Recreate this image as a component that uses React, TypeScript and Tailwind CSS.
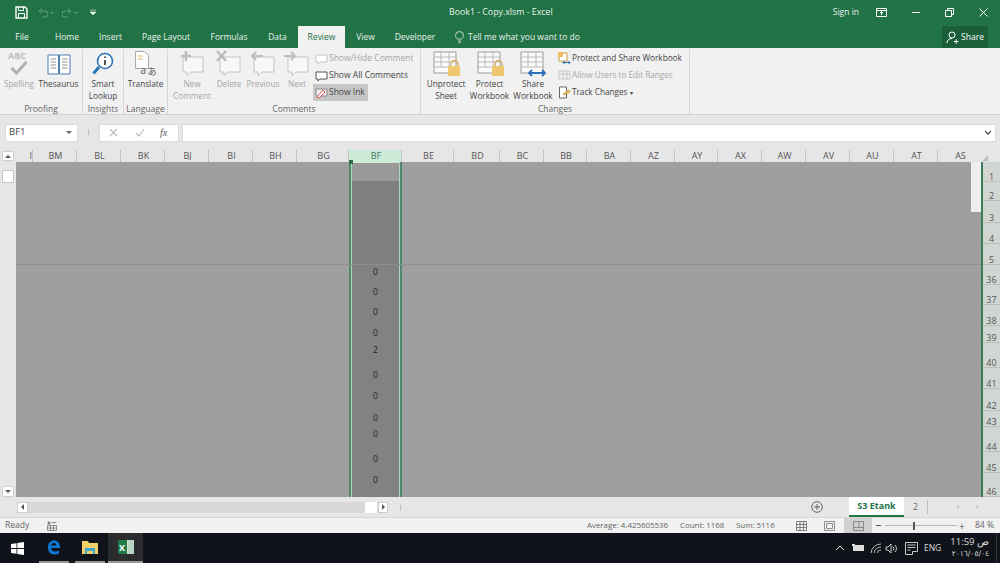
import React from "react";

function CommentIcon({ mark }: { mark: "plus" | "x" | "left" | "right" }) {
  return (
    <svg width="30" height="28" viewBox="0 0 30 28" fill="none">
      <path d="M6 7h20v15H14l-4 4v-4H6z" fill="#f8f8f8" stroke="#c4c4c4" />
      {mark === "plus" && <path d="M9 1v10M4 6h10" stroke="#bdbdbd" strokeWidth="2.4" />}
      {mark === "x" && <path d="M3 1l9 10M12 1L3 11" stroke="#b5b5b5" strokeWidth="2" />}
      {mark === "left" && <path d="M15 6H4M8 2L4 6l4 4" stroke="#bdbdbd" strokeWidth="2" />}
      {mark === "right" && <path d="M2 6h11M9 2l4 4-4 4" stroke="#bdbdbd" strokeWidth="2" />}
    </svg>
  );
}

function SheetIcon({ kind }: { kind: "unprotect" | "protect" | "share" }) {
  return (
    <svg width="30" height="28" viewBox="0 0 30 28" fill="none">
      <path d="M3 2h22v21H3z" fill="#fbfbfb" stroke="#9a9a9a" />
      <path d="M3 7h22M3 12h22M3 17h22M10 2v15M18 2v15" stroke="#b8b8b8" />
      {kind === "share" ? (
        <path d="M11 23h16M14 20l-3 3 3 3M24 20l3 3-3 3" stroke="#2f6fb5" strokeWidth="1.8" />
      ) : (
        <g>
          <path d="M20 16v-2a3.500 3.500 0 0 1 7 0v2" stroke="#d2aa55" strokeWidth="1.3" />
          <rect x="17" y="16" width="12" height="10" fill="#f0c671" />
        </g>
      )}
    </svg>
  );
}

function Big({ w, label, disabled, icon }: { w: string; label: React.ReactNode; disabled?: boolean; icon: React.ReactNode }) {
  return (
    <div className={`${w} flex flex-none flex-col items-center`}>
      <div className="flex h-[28px] items-center justify-center">{icon}</div>
      <div className={`whitespace-nowrap text-center text-[8.2px] leading-[12px] ${disabled ? "text-[#a6a6a6]" : "text-[#444444]"}`}>{label}</div>
    </div>
  );
}

function Group({ w, title, children }: { w: string; title: string; children: React.ReactNode }) {
  return (
    <div className={`${w} flex h-[66px] flex-none flex-col border-r border-[#d6d6d6]`}>
      <div className="flex h-[52px] items-start justify-center pt-[1px]">{children}</div>
      <div className="mt-auto text-center leading-[12px] text-[#666666]">{title}</div>
    </div>
  );
}

function Small({ icon, text, disabled, active }: { icon: React.ReactNode; text: React.ReactNode; disabled?: boolean; active?: boolean }) {
  return (
    <div className={`flex h-[17px] items-center gap-[1px] whitespace-nowrap pl-[2px] ${active ? "w-[55px] bg-[#c6c6c6]" : ""} ${disabled ? "text-[#a6a6a6]" : "text-[#444444]"}`}>
      <span className="flex h-[14px] w-[13px] flex-none items-center justify-center">{icon}</span>
      <span>{text}</span>
    </div>
  );
}

const Bubble = ({ c }: { c: string }) => (
  <svg width="13" height="12" viewBox="0 0 13 12" fill="none">
    <path d="M1 2h11v7H5l-2 2V9H1z" fill="#fff" stroke={c} />
  </svg>
);

const cols: [string, number][] = [
  ["BM", 44], ["BL", 44], ["BK", 44], ["BJ", 44], ["BI", 44], ["BH", 44], ["BG", 52], ["BF", 53], ["BE", 52],
  ["BD", 46], ["BC", 44], ["BB", 43], ["BA", 44], ["AZ", 44], ["AY", 43], ["AX", 44], ["AW", 44], ["AV", 44], ["AU", 44], ["AT", 44], ["AS", 44],
];

const topRows: [string, number][] = [["1", 20], ["2", 19], ["3", 22], ["4", 21], ["5", 21]];
const lowRows: [string, number, string][] = [
  ["36", 20, "0"], ["37", 20, "0"], ["38", 21, "0"], ["39", 17, "0"], ["40", 25, "2"], ["41", 21, "0"],
  ["42", 22, "0"], ["43", 16, "0"], ["44", 25, "0"], ["45", 21, "0"], ["46", 24, "0"],
];

const tabs = [
  ["File", "w-[44px]"], ["Home", "w-[46px]"], ["Insert", "w-[41px]"], ["Page Layout", "w-[70px]"],
  ["Formulas", "w-[56px]"], ["Data", "w-[41px]"],
];

function RowHead({ n, h }: { n: string; h: number }) {
  return (
    <div
      className="flex items-end justify-center border-b border-[#b9bfbb] text-[9px] leading-[9px] text-[#555555]"
      style={{ height: h }}
    >
      {n}
    </div>
  );
}

export default function App() {
  return (
    <div className="flex h-[563px] w-[1000px] flex-col overflow-hidden bg-[#e6e6e6] font-['Open_Sans','Noto_Sans',sans-serif] text-[8.5px]">
      {/* Title bar */}
      <div className="flex h-[25px] flex-none items-center bg-[#217346] text-[#e8f1ec]">
        <div className="flex w-[100px] flex-none items-center pl-[15px]">
          <svg width="13" height="13" viewBox="0 0 13 13" fill="none">
            <path d="M1 1h9l2 2v9H1z" stroke="#fff" strokeWidth="1.4" />
            <path d="M3.500 1v3.500h5V1M3.500 12V7.500h6V12" stroke="#fff" />
          </svg>
          <svg className="ml-[10px]" width="16" height="10" viewBox="0 0 16 10" fill="none">
            <path d="M1 3h6a3 3 0 0 1 0 6H4M1 3l3-2.500M1 3l3 2.500" stroke="#5f9c7c" />
            <path d="M12 4l2 2 2-2" fill="#5f9c7c" />
          </svg>
          <svg className="ml-[8px]" width="16" height="10" viewBox="0 0 16 10" fill="none">
            <path d="M9 3H3a3 3 0 0 0 0 6h3M9 3L6 .5M9 3L6 5.500" stroke="#5f9c7c" />
            <path d="M12 4l2 2 2-2" fill="#5f9c7c" />
          </svg>
          <svg className="ml-[12px]" width="6" height="7" viewBox="0 0 6 7">
            <path d="M0 1h6M0 3h6l-3 3z" fill="#e8f1ec" stroke="#e8f1ec" strokeWidth=".6" />
          </svg>
        </div>
        <div className="flex-1 pl-[349px] text-[8.8px]">Book1 - Copy.xlsm - Excel</div>
        <span>Sign in</span>
        <svg className="ml-[17px]" width="11" height="9" viewBox="0 0 11 9" fill="none">
          <path d="M.5.500h10v8H.5zM.5 2.500h10M5.500 7V4M4 5l1.500-1.500L7 5" stroke="#fff" />
        </svg>
        <div className="ml-[25px] h-[1px] w-[8px] bg-white" />
        <svg className="ml-[25px]" width="9" height="9" viewBox="0 0 9 9" fill="none">
          <path d="M.5 2.500h6v6h-6zM2.500 2.500v-2h6v6h-2" stroke="#fff" />
        </svg>
        <svg className="ml-[25px] mr-[12px]" width="9" height="9" viewBox="0 0 9 9" fill="none">
          <path d="M.5.500l8 8M8.500.500l-8 8" stroke="#fff" />
        </svg>
      </div>

      {/* Tabs */}
      <div className="flex h-[23px] flex-none items-stretch bg-[#217346] pt-[1px] text-[#e8f1ec]">
        {tabs.map(([t, w]) => (
          <div key={t} className={`${w} flex flex-none items-center justify-center`}>{t}</div>
        ))}
        <div className="flex w-[47px] flex-none items-center justify-center bg-[#f1f1f1] text-[#217346]">Review</div>
        <div className="flex w-[41px] flex-none items-center justify-center">View</div>
        <div className="flex w-[58px] flex-none items-center justify-center">Developer</div>
        <div className="ml-[11px] flex items-center gap-[4px]">
          <svg width="9" height="12" viewBox="0 0 9 12" fill="none">
            <path d="M2.500 8C1 6.800.5 5.800.5 4.500a4 4 0 0 1 8 0C8.500 5.800 8 6.800 6.500 8zM3 10h3M3.500 11.500h2" stroke="#e8f1ec" strokeWidth=".8" />
          </svg>
          <span>Tell me what you want to do</span>
        </div>
        <div className="ml-auto mr-[12px] flex w-[46px] items-center justify-center gap-[2px] bg-[#1b5e3a] text-white">
          <svg width="13" height="13" viewBox="0 0 13 13" fill="none">
            <circle cx="6" cy="4" r="3" stroke="#fff" />
            <path d="M1 12c0-3 2-4.500 5-4.500M8 10.500h4.500M10.200 8.300v4.500" stroke="#fff" />
          </svg>
          <span>Share</span>
        </div>
      </div>

      {/* Ribbon */}
      <div className="flex h-[67px] flex-none items-start border-b border-[#d2d2d2] bg-[#f1f1f1] pt-[1px]">
        <Group w="w-[83px]" title="Proofing">
          <div className="flex w-full items-start">
            <Big w="w-[38px]" disabled label="Spelling" icon={
              <div className="relative h-[28px] w-[24px]">
                <span className="absolute left-[1px] top-[1px] text-[9px] font-bold leading-[9px] text-[#bdbdbd]">ABC</span>
                <svg className="absolute left-[3px] top-[10px]" width="18" height="15" viewBox="0 0 18 15" fill="none">
                  <path d="M1.500 8l5 5L16.500 2" stroke="#b0b0b0" strokeWidth="3" />
                </svg>
              </div>
            } />
            <Big w="w-[41px]" label="Thesaurus" icon={
              <svg width="24" height="21" viewBox="0 0 24 21" fill="none">
                <path d="M1 1h10.500v19H1zM12.500 1H23v19H12.500z" fill="#fff" stroke="#4a7fb5" />
                <path d="M3.500 5h5.500M3.500 8h5.500M3.500 11h5.500M3.500 14h5.500M15 5h5.500M15 8h5.500M15 11h5.500M15 14h5.500" stroke="#8d8d8d" />
              </svg>
            } />
          </div>
        </Group>
        <Group w="w-[41px]" title="Insights">
          <Big w="w-[38px]" label={<>Smart<br />Lookup</>} icon={
            <svg width="22" height="24" viewBox="0 0 22 24" fill="none">
              <circle cx="13" cy="9" r="7.500" fill="#fff" stroke="#2e75b6" strokeWidth="1.600" />
              <path d="M13 8v5M13 4.500v1.500" stroke="#444" strokeWidth="1.800" />
              <path d="M7 15L1.500 21.500" stroke="#2e75b6" strokeWidth="3" />
            </svg>
          } />
        </Group>
        <Group w="w-[44px]" title="Language">
          <Big w="w-[42px]" label="Translate" icon={
            <div className="relative h-[26px] w-[22px] text-[#555555]">
              <svg className="absolute left-0 top-0" width="14" height="18" viewBox="0 0 14 18" fill="none">
                <path d="M.5.500h9l4 4v13H.5z" fill="#fff" stroke="#a8a8a8" />
                <path d="M3 5h5M3 8h5" stroke="#e0b060" />
              </svg>
              <span className="absolute bottom-[1px] left-[6px] text-[10px] leading-[11px]">a</span>
              <span className="absolute bottom-0 right-0 font-['Noto_Sans_CJK_JP',sans-serif] text-[9px] leading-[10px]">あ</span>
            </div>
          } />
        </Group>
        <Group w="w-[253px]" title="Comments">
          <div className="flex w-full items-start pl-[3px]">
            <Big w="w-[42px]" disabled label={<>New<br />Comment</>} icon={<CommentIcon mark="plus" />} />
            <Big w="w-[32px]" disabled label="Delete" icon={<CommentIcon mark="x" />} />
            <Big w="w-[36px]" disabled label="Previous" icon={<CommentIcon mark="left" />} />
            <Big w="w-[32px]" disabled label="Next" icon={<CommentIcon mark="right" />} />
            <div className="flex flex-col">
              <Small disabled icon={<Bubble c="#c4c4c4" />} text="Show/Hide Comment" />
              <Small icon={<Bubble c="#555" />} text="Show All Comments" />
              <Small active icon={
                <svg width="13" height="12" viewBox="0 0 13 12" fill="none">
                  <path d="M1 2h11v7H5l-2 2V9H1z" fill="#eee" stroke="#888" />
                  <path d="M2 10l6-7 2 2-6 6z" fill="#fff" stroke="#d9534f" />
                </svg>
              } text="Show Ink" />
            </div>
          </div>
        </Group>
        <Group w="w-[269px]" title="Changes">
          <div className="flex w-full items-start pl-[3px]">
            <Big w="w-[44px]" label={<>Unprotect<br />Sheet</>} icon={<SheetIcon kind="unprotect" />} />
            <Big w="w-[43px]" label={<>Protect<br />Workbook</>} icon={<SheetIcon kind="protect" />} />
            <Big w="w-[44px]" label={<>Share<br />Workbook</>} icon={<SheetIcon kind="share" />} />
            <div className="ml-[1px] flex flex-col text-[8.2px]">
              <Small icon={
                <svg width="13" height="13" viewBox="0 0 13 13" fill="none">
                  <path d="M1 1h8v8H1z" fill="#fff" stroke="#c79a3a" />
                  <rect x="0" y="0" width="5" height="5" fill="#eebc5a" />
                  <path d="M5 10.500h7M6.500 9L5 10.500 6.500 12M10.500 9l1.500 1.500-1.500 1.500" stroke="#2f6fb5" />
                </svg>
              } text="Protect and Share Workbook" />
              <Small disabled icon={
                <svg width="13" height="12" viewBox="0 0 13 12" fill="none">
                  <path d="M1 1h11v8H1zM1 4h11M5 1v8M9 1v8" stroke="#c6c6c6" />
                </svg>
              } text="Allow Users to Edit Ranges" />
              <Small icon={
                <svg width="13" height="13" viewBox="0 0 13 13" fill="none">
                  <path d="M1.500 1h7v11h-7z" fill="#fff" stroke="#666" />
                  <path d="M5 8l6-4 1 2-6 3z" fill="#eebc5a" stroke="#b88a30" strokeWidth=".6" />
                </svg>
              } text={<>Track Changes <span className="text-[6px]">▾</span></>} />
            </div>
          </div>
        </Group>
      </div>

      {/* Formula bar */}
      <div className="flex h-[35px] flex-none items-center bg-[#e6e6e6] pl-[5px] pr-[4px]">
        <div className="flex h-[18px] w-[73px] flex-none items-center justify-between border border-[#dcdcdc] bg-white pl-[3px] pr-[5px] text-[9.5px] text-[#444444]">
          <span>BF1</span>
          <span className="h-0 w-0 border-x-[3px] border-t-[3px] border-x-transparent border-t-[#666666]" />
        </div>
        <div className="ml-[10px] mr-[10px] flex flex-col gap-[1px]">
          <div className="h-[1px] w-[1px] bg-[#999]" />
          <div className="h-[1px] w-[1px] bg-[#999]" />
          <div className="h-[1px] w-[1px] bg-[#999]" />
        </div>
        <div className="flex h-[18px] w-[80px] flex-none items-center border border-[#dcdcdc] bg-white pl-[9px]">
          <svg width="9" height="9" viewBox="0 0 9 9" fill="none"><path d="M1 1l7 7M8 1L1 8" stroke="#bdbdbd" strokeWidth="1.200" /></svg>
          <svg className="ml-[17px]" width="10" height="9" viewBox="0 0 10 9" fill="none"><path d="M1 5l3 3 5-7" stroke="#bdbdbd" strokeWidth="1.200" /></svg>
          <span className="ml-[15px] font-['Liberation_Serif',serif] text-[10px] italic text-[#555555]">fx</span>
        </div>
        <div className="ml-[3px] flex h-[18px] flex-1 items-center justify-end border border-[#dcdcdc] bg-white pr-[3px]">
          <svg width="8" height="6" viewBox="0 0 8 6" fill="none"><path d="M1 1l3 3 3-3" stroke="#555" strokeWidth="1.300" /></svg>
        </div>
      </div>

      {/* Sheet */}
      <div className="flex h-[347px] flex-none">
        <div className="flex w-[16px] flex-none flex-col items-center bg-[#e6e6e6] pt-[1px]">
          <div className="flex h-[10px] w-[12px] items-center justify-center border border-[#d0d0d0] bg-white">
            <span className="h-0 w-0 border-x-[3px] border-b-[3px] border-x-transparent border-b-[#555555]" />
          </div>
          <div className="mt-[9px] h-[13px] w-[12px] border border-[#c8c8c8] bg-white" />
          <div className="mt-auto flex h-[11px] w-[12px] items-center justify-center border border-[#d0d0d0] bg-white">
            <span className="h-0 w-0 border-x-[3px] border-t-[3px] border-x-transparent border-t-[#555555]" />
          </div>
        </div>

        <div className="flex w-[965px] flex-none flex-col overflow-hidden">
          <div className="flex h-[12px] flex-none text-[9px] text-[#555555]">
            <div className="w-[17px] flex-none border-r border-[#c4c4c4] text-right leading-[12px]">I</div>
            {cols.map(([c, w]) => (
              <div
                key={c}
                className={`flex flex-none items-center justify-center border-r border-[#c4c4c4] pl-[2px] leading-[12px] ${c === "BF" ? "bg-[#cdebd9] text-[#3d7a5b]" : ""}`}
                style={{ width: w }}
              >
                {c}
              </div>
            ))}
          </div>

          {/* Frozen pane */}
          <div className="flex h-[103px] flex-none border-b border-[#8e8e8e] bg-[#9f9f9f]">
            <div className="w-[333px] flex-none" />
            <div className="relative flex w-[53px] flex-none flex-col border-x-2 border-[#4f8a6c]">
              <div className="flex flex-1 flex-col border-x border-[#b4d0c0]">
                <div className="h-[19px] flex-none border-t border-[#cfe6d9] bg-[#999999]" />
                <div className="flex-1 bg-[#7f7f7f]" />
              </div>
              <div className="absolute -left-[2px] -top-[2px] h-[4px] w-[4px] bg-[#2f6b4c]" />
            </div>
            <div className="flex-1" />
            <div className="h-[50px] w-[10px] flex-none bg-[#eeeeee]" />
          </div>

          {/* Scrolling pane */}
          <div className="flex min-h-0 flex-1 bg-[#9f9f9f]">
            <div className="w-[333px] flex-none" />
            <div className="w-[53px] flex-none border-x-2 border-[#4f8a6c]">
              <div className="flex h-full flex-col overflow-hidden border-x border-[#b4d0c0] bg-[#828282] text-[#222222]">
                {lowRows.map(([n, h, v]) => (
                  <div key={n} className="flex-none pt-[2px] text-center leading-[10px]" style={{ height: h }}>{v}</div>
                ))}
              </div>
            </div>
            <div className="flex-1" />
          </div>
        </div>

        <div className="flex min-w-0 flex-1 flex-col">
          <div className="flex h-[12px] flex-none items-end justify-start pb-[1px] pl-[1px]">
            <span className="h-0 w-0 border-b-[6px] border-l-[6px] border-b-[#bdbdbd] border-l-transparent" />
          </div>
          <div className="flex-1 overflow-hidden border-l-2 border-[#3f7c5c] bg-[#d2d6d3]">
            {topRows.map(([n, h]) => <RowHead key={n} n={n} h={h} />)}
            {lowRows.map(([n, h]) => <RowHead key={n} n={n} h={h} />)}
          </div>
        </div>
      </div>

      {/* Sheet tabs */}
      <div className="flex h-[20px] flex-none items-center bg-[#e6e6e6]">
        <div className="ml-[17px] flex h-[11px] w-[371px] flex-none items-center justify-between bg-[#d8d8d8]">
          <div className="flex h-[11px] w-[11px] items-center justify-center border border-[#cfcfcf] bg-white">
            <span className="h-0 w-0 border-y-[3px] border-r-[3px] border-y-transparent border-r-[#555555]" />
          </div>
          <div className="flex items-center gap-[1px]">
            <div className="h-[11px] w-[12px] bg-white" />
            <div className="flex h-[11px] w-[10px] items-center justify-center border border-[#cfcfcf] bg-white">
              <span className="h-0 w-0 border-y-[3px] border-l-[3px] border-y-transparent border-l-[#555555]" />
            </div>
          </div>
        </div>
        <div className="ml-[12px] flex flex-col gap-[1px]">
          <div className="h-[1px] w-[1px] bg-[#999]" />
          <div className="h-[1px] w-[1px] bg-[#999]" />
          <div className="h-[1px] w-[1px] bg-[#999]" />
        </div>
        <svg className="ml-[410px] flex-none" width="12" height="12" viewBox="0 0 12 12" fill="none">
          <circle cx="6" cy="6" r="5.300" stroke="#666" />
          <path d="M6 3v6M3 6h6" stroke="#666" />
        </svg>
        <div className="ml-[26px] flex h-[20px] w-[55px] flex-none items-center justify-center self-start border-b-2 border-[#217346] bg-white text-[9px] font-bold text-[#217346]">S3 Etank</div>
        <span className="ml-[9px] text-[#666666]">2</span>
        <div className="ml-[9px] h-[14px] w-[1px] bg-[#bcbcbc]" />
        <span className="ml-[28px] h-0 w-0 border-y-[2px] border-r-[3px] border-y-transparent border-r-[#c8c8c8]" />
        <span className="ml-[17px] h-0 w-0 border-y-[2px] border-l-[3px] border-y-transparent border-l-[#c8c8c8]" />
      </div>

      {/* Status */}
      <div className="flex h-[16px] flex-none items-center border-t border-[#d8d8d8] bg-[#f1f1f1] text-[#666666]">
        <span className="ml-[5px] w-[42px] flex-none">Ready</span>
        <svg className="flex-none" width="10" height="10" viewBox="0 0 10 10" fill="none">
          <circle cx="2" cy="2" r="1.500" fill="#777" />
          <path d="M4.500 1.500h5M.5 4.500h9v5h-9zM3.500 4.500v5M6.500 4.500v5M.5 7h9" stroke="#777" strokeWidth=".8" />
        </svg>
        <span className="ml-[530px] w-[93px] flex-none whitespace-nowrap text-[7.9px]">Average: 4.425605536</span>
        <span className="w-[56px] flex-none whitespace-nowrap text-[7.9px]">Count: 1168</span>
        <span className="w-[60px] flex-none whitespace-nowrap text-[7.9px]">Sum: 5116</span>
        <svg className="flex-none" width="11" height="10" viewBox="0 0 11 10" fill="none">
          <path d="M.5.500h10v9H.5zM.5 3.500h10M.5 6.500h10M4 .5v9M7.500.5v9" stroke="#666" strokeWidth=".8" />
        </svg>
        <svg className="ml-[17px] flex-none" width="11" height="10" viewBox="0 0 11 10" fill="none">
          <path d="M.5.500h10v9H.5zM2.500 2.500h6v5h-6z" stroke="#777" strokeWidth=".8" />
        </svg>
        <div className="ml-[9px] flex h-[15px] w-[28px] flex-none items-center justify-center bg-[#d0d0d0]">
          <svg width="11" height="10" viewBox="0 0 11 10" fill="none">
            <path d="M.5.500h10v9H.5zM.5 6.500h10M6 .5v6" stroke="#777" strokeWidth=".8" />
          </svg>
        </div>
        <span className="ml-[4px] h-[1px] w-[5px] flex-none bg-[#555555]" />
        <div className="relative ml-[4px] flex h-[8px] w-[72px] flex-none items-center">
          <div className="h-[1px] w-full bg-[#b8b8b8]" />
          <div className="absolute left-[28px] top-0 h-[8px] w-[2px] bg-[#555555]" />
        </div>
        <span className="ml-[2px] w-[6px] flex-none text-[10px] leading-[10px] text-[#555555]">+</span>
        <span className="ml-[10px] whitespace-nowrap">84 %</span>
      </div>

      {/* Taskbar */}
      <div className="flex h-[30px] flex-none items-stretch bg-[#10141a] text-[#dddddd]">
        <div className="flex w-[36px] flex-none items-center justify-center pr-[1px]">
          <svg width="13" height="13" viewBox="0 0 13 13"><path d="M0 2l5.500-.8V6H0zM6.300 1.100L13 0v6H6.300zM0 7h5.500v4.800L0 11zM6.300 7H13v6l-6.700-1z" fill="#fff" /></svg>
        </div>
        <div className="flex w-[36px] flex-none flex-col">
          <div className="flex flex-1 items-center justify-center">
            <svg width="16" height="16" viewBox="0 0 16 16" fill="none">
              <path d="M2 8.500C2 4 4.500 1.500 8 1.500c3.500 0 6 2.500 6 6.500v1H5c.2 2.500 2 3.500 4 3.500 1.500 0 3-.4 4-1v3c-1.200.6-3 1-4.500 1C4 15.500 2 12.500 2 8.500zM5 6.500h5.500C10.300 5 9.500 4 8 4S5.300 5 5 6.500z" fill="#0f78d4" />
            </svg>
          </div>
          <div className="mx-[3px] h-[2px] bg-[#9a9a9a]" />
        </div>
        <div className="flex w-[36px] flex-none flex-col">
          <div className="flex flex-1 items-center justify-center">
            <svg width="16" height="14" viewBox="0 0 16 14">
              <path d="M0 1h6l1 2h9v11H0z" fill="#f5d06a" />
              <path d="M3 8h10v6h-2v-3H5v3H3z" fill="#3aa6c8" />
            </svg>
          </div>
          <div className="mx-[3px] h-[2px] bg-[#9a9a9a]" />
        </div>
        <div className="flex w-[35px] flex-none flex-col bg-[#2b2c2e]">
          <div className="flex flex-1 items-center justify-center">
            <div className="flex h-[14px] w-[16px] items-stretch bg-[#1f7a47]">
              <span className="flex w-[9px] items-center justify-center text-[9px] font-bold leading-none text-white">X</span>
              <span className="flex-1 border-l border-[#cfe3d7] bg-[#bcd6c6]" />
            </div>
          </div>
          <div className="h-[2px] bg-[#9a9a9a]" />
        </div>
        <div className="ml-auto flex items-center">
          <svg width="10" height="6" viewBox="0 0 10 6" fill="none"><path d="M1 5l4-4 4 4" stroke="#ddd" /></svg>
          <svg className="ml-[7px]" width="12" height="8" viewBox="0 0 12 8"><rect x="1" y="1" width="11" height="6" fill="#ddd" /><rect x="0" y="0" width="3" height="2" fill="#ddd" /></svg>
          <svg className="ml-[6px]" width="12" height="11" viewBox="0 0 12 11" fill="none"><path d="M1 10a10 10 0 0 1 10-9M4 10a7 7 0 0 1 7-6M7 10a4 4 0 0 1 4-3" stroke="#bbb" /></svg>
          <svg className="ml-[3px]" width="13" height="11" viewBox="0 0 13 11" fill="none"><path d="M1 4h2l3-3v9L3 7H1zM8 3.500a3 3 0 0 1 0 4M10 2a5 5 0 0 1 0 7" stroke="#ddd" strokeWidth=".9" /></svg>
          <svg className="ml-[7px]" width="13" height="13" viewBox="0 0 13 13" fill="none"><path d="M.5.500h12v9h-5v3h-7zM2.500 3h8M2.500 5.500h8M2.500 8h3" stroke="#ddd" strokeWidth=".9" /></svg>
          <span className="ml-[6px] w-[24px] flex-none text-[8.500px]">ENG</span>
          <div className="w-[41px] flex-none text-right leading-[12px]">
            <div className="whitespace-nowrap text-[9.500px]">11:59 ص</div>
            <div className="whitespace-nowrap font-['DejaVu_Sans',sans-serif] text-[7.5px]">٢٠١٦/٠٥/٠٤</div>
          </div>
          <div className="ml-[7px] h-full w-[4px] border-l border-[#33363a]" />
        </div>
      </div>
    </div>
  );
}
